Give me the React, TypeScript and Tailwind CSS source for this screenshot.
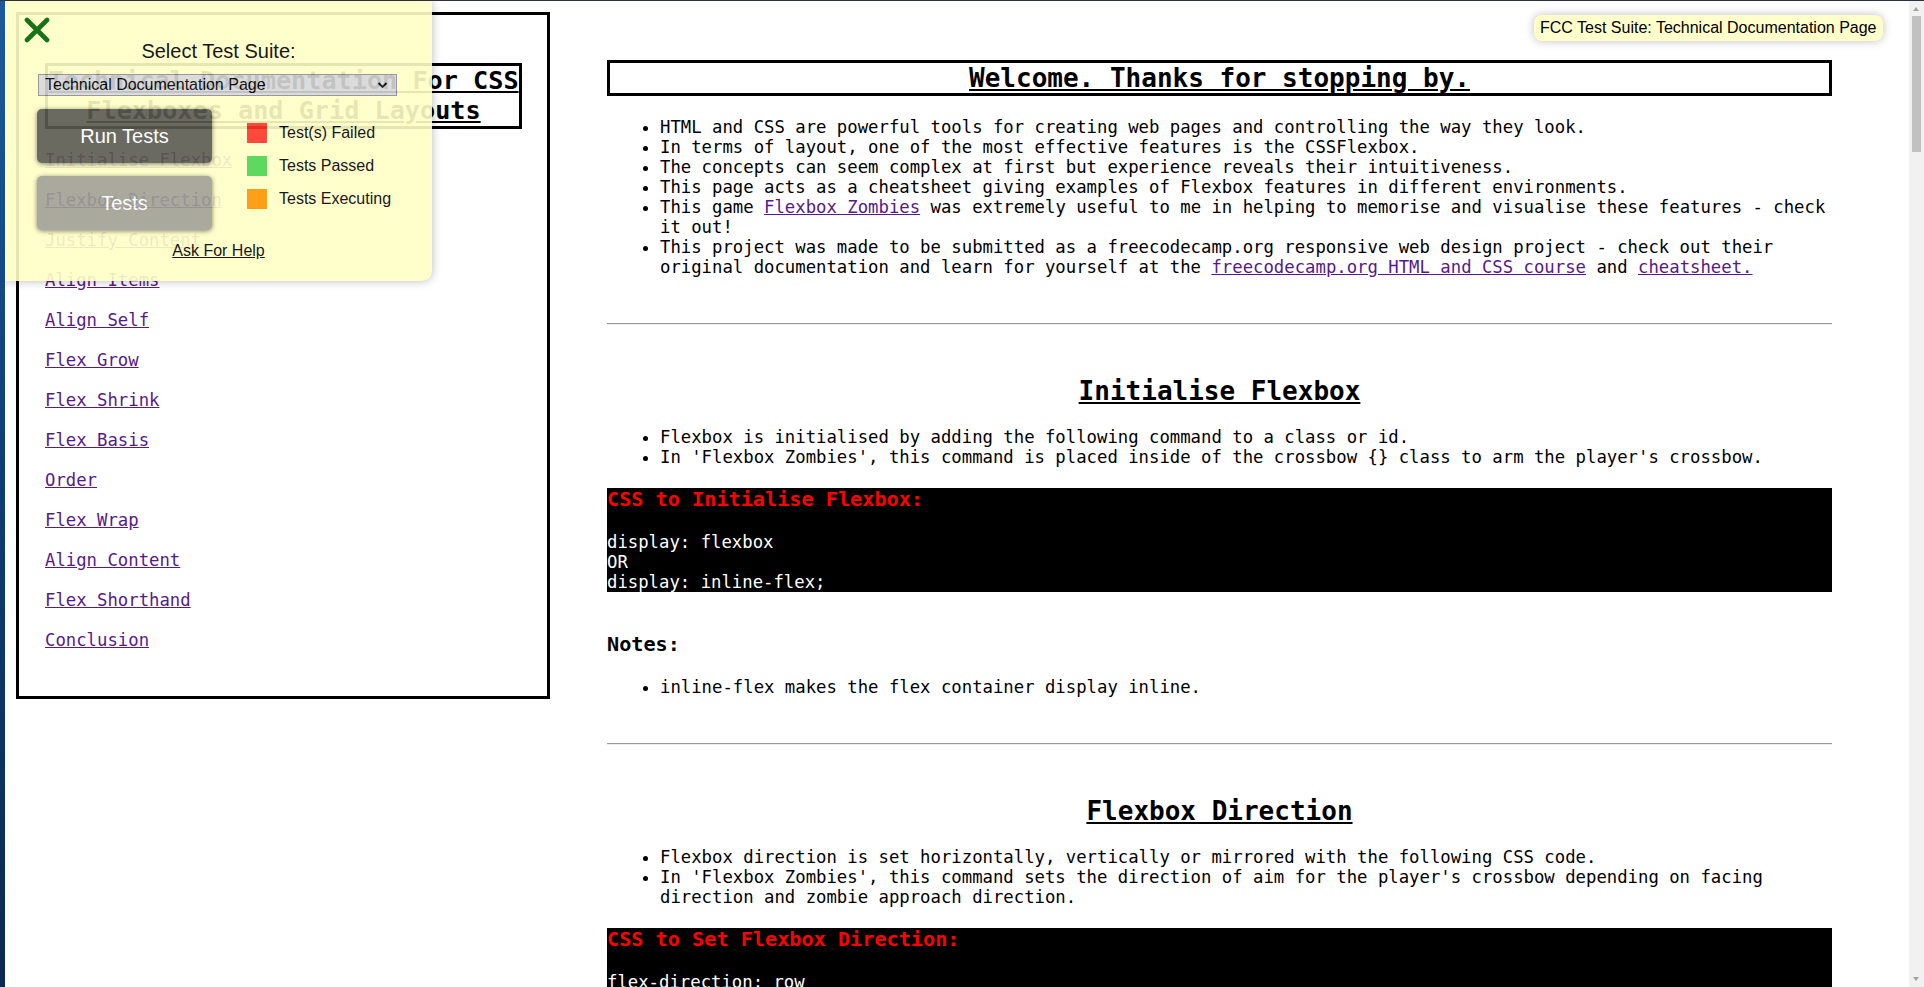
import type { ReactNode } from 'react'

const navLinks = [
  'Initialise Flexbox',
  'Flexbox Direction',
  'Justify Content',
  'Align Items',
  'Align Self',
  'Flex Grow',
  'Flex Shrink',
  'Flex Basis',
  'Order',
  'Flex Wrap',
  'Align Content',
  'Flex Shorthand',
  'Conclusion',
]

function Link({ children }: { children: ReactNode }) {
  return (
    <a className="text-[#551a8b] underline" href="#">
      {children}
    </a>
  )
}

function Bullets({ items, className = '' }: { items: ReactNode[]; className?: string }) {
  return (
    <ul className={`list-disc pl-[53px] ${className}`}>
      {items.map((item, i) => (
        <li key={i}>{item}</li>
      ))}
    </ul>
  )
}

function Heading({ children, className = '' }: { children: ReactNode; className?: string }) {
  return <h2 className={`text-center text-[26px] leading-[30px] font-bold underline ${className}`}>{children}</h2>
}

function Rule() {
  return <div className="mt-[46.5px] border-t border-b border-t-[#9a9a9a] border-b-[#ececec]" />
}

function CodeBlock({ title, lines }: { title: string; lines: string[] }) {
  return (
    <div className="mt-[21px] bg-black text-white">
      <h3 className="text-[20.2px] leading-[23.5px] font-bold text-[#ff0000]">{title}</h3>
      <div className="h-[20.5px]" />
      {lines.map((line) => (
        <div className="leading-[20px] whitespace-pre" key={line}>
          {line}
        </div>
      ))}
    </div>
  )
}

function TestPanel() {
  return (
    <div className="absolute top-0 left-0 h-[280px] w-[427px] rounded-br-[10px] bg-[#ffffc7] font-['Liberation_Sans',Arial,sans-serif] text-black opacity-90 shadow-[0_0_10px_rgba(0,0,0,0.3)]">
      <svg className="absolute top-[16px] left-[19px] h-[26px] w-[26px]" viewBox="0 0 26 26">
        <path d="M3 3 L23 23 M23 3 L3 23" stroke="#006400" strokeLinecap="round" strokeWidth="4.6" />
      </svg>
      <p className="pt-[39px] text-center text-[20px] leading-[22px]">Select Test Suite:</p>
      <div className="mt-[12px] ml-[33px] flex h-[22px] w-[359px] items-center justify-between border border-[#8f8f8f] bg-[#d8d8d8] pr-[8px] pl-[6px] text-[16px]">
        <span>Technical Documentation Page</span>
        <svg className="h-[8px] w-[11px]" viewBox="0 0 11 8">
          <path d="M1.5 2 L5.5 6 L9.5 2" fill="none" stroke="#111" strokeWidth="1.8" />
        </svg>
      </div>
      <div className="mt-[13px] ml-[32px] flex">
        <div className="flex w-[175px] flex-col gap-[13px]">
          <button className="h-[54px] rounded-[5px] bg-[#5a5a50] text-[20px] text-white shadow-[0_1px_5px_rgba(0,0,0,0.55)]" type="button">
            Run Tests
          </button>
          <button className="h-[54px] rounded-[5px] bg-[#a0a094] text-[20px] text-white shadow-[0_1px_5px_rgba(0,0,0,0.55)]" type="button">
            Tests
          </button>
        </div>
        <div className="mt-[14px] ml-[35px] flex flex-col gap-[13px] text-[16px]">
          <div className="flex h-[20px] items-center gap-[12px]">
            <span className="h-[20px] w-[20px] bg-[#ff3627]" />
            Test(s) Failed
          </div>
          <div className="flex h-[20px] items-center gap-[12px]">
            <span className="h-[20px] w-[20px] bg-[#4ed44e]" />
            Tests Passed
          </div>
          <div className="flex h-[20px] items-center gap-[12px]">
            <span className="h-[20px] w-[20px] bg-[#ff9500]" />
            Tests Executing
          </div>
        </div>
      </div>
      <p className="mt-[12px] text-center text-[16px] leading-[18px]">
        <a className="underline" href="#">
          Ask For Help
        </a>
      </p>
    </div>
  )
}

function Scrollbar() {
  return (
    <div className="relative w-[15px] bg-[#f1f1f1]">
      <span className="absolute top-[6px] left-[4px] h-0 w-0 border-r-[3.5px] border-b-[4px] border-l-[3.5px] border-r-transparent border-b-[#a3a3a3] border-l-transparent" />
      <div className="absolute top-[15px] left-[3px] h-[136px] w-[9px] bg-[#c1c1c1]" />
      <span className="absolute bottom-[6px] left-[4px] h-0 w-0 border-t-[4px] border-r-[3.5px] border-l-[3.5px] border-t-[#a3a3a3] border-r-transparent border-l-transparent" />
    </div>
  )
}

export default function App() {
  return (
    <div className="flex h-[987px] flex-col overflow-hidden bg-white">
      <div className="h-px bg-[#2d323c]" />
      <div className="flex min-h-0 flex-1">
        <div className="w-[5px] bg-gradient-to-b from-[#1c5a9c] via-[#0e3d73] to-[#0a2a50]" />
        <div className="relative flex-1 overflow-hidden font-['DejaVu_Sans_Mono',monospace] text-[17.3px] leading-[20px] text-black">
          <div className="flex items-start pt-[11px] pl-[11px]">
            <nav className="h-[687px] w-[534px] shrink-0 border-[3px] border-black pt-[48px]">
              <h1 className="ml-[26px] w-[477px] border-[3px] border-black text-center text-[25.2px] leading-[30px] font-bold whitespace-nowrap underline">
                Technical Documentation For CSS
                <br />
                Flexboxes and Grid Layouts
              </h1>
              <div className="mt-[20.5px] flex flex-col items-start gap-[20px] pl-[26px]">
                {navLinks.map((label) => (
                  <Link key={label}>{label}</Link>
                ))}
              </div>
            </nav>
            <main className="mt-[48px] ml-[57px] w-[1225px] shrink-0">
              <h2 className="border-[3px] border-black text-center text-[26px] leading-[30px] font-bold">
                <span className="underline">Welcome. Thanks for stopping by.</span>
              </h2>
              <Bullets
                className="mt-[20.5px]"
                items={[
                  'HTML and CSS are powerful tools for creating web pages and controlling the way they look.',
                  'In terms of layout, one of the most effective features is the CSSFlexbox.',
                  'The concepts can seem complex at first but experience reveals their intuitiveness.',
                  'This page acts as a cheatsheet giving examples of Flexbox features in different environments.',
                  <>
                    This game <Link>Flexbox Zombies</Link> was extremely useful to me in helping to memorise and visualise these
                    features - check it out!
                  </>,
                  <>
                    This project was made to be submitted as a freecodecamp.org responsive web design project - check out their
                    original documentation and learn for yourself at the <Link>freecodecamp.org HTML and CSS course</Link> and{' '}
                    <Link>cheatsheet.</Link>
                  </>,
                ]}
              />

              <Rule />
              <Heading className="mt-[51px]">Initialise Flexbox</Heading>
              <Bullets
                className="mt-[21px]"
                items={[
                  'Flexbox is initialised by adding the following command to a class or id.',
                  "In 'Flexbox Zombies', this command is placed inside of the crossbow {} class to arm the player's crossbow.",
                ]}
              />
              <CodeBlock lines={['display: flexbox', 'OR', 'display: inline-flex;']} title="CSS to Initialise Flexbox:" />
              <h3 className="mt-[41px] text-[20.2px] leading-[23.5px] font-bold">Notes:</h3>
              <Bullets className="mt-[20px]" items={['inline-flex makes the flex container display inline.']} />

              <Rule />
              <Heading className="mt-[51px]">Flexbox Direction</Heading>
              <Bullets
                className="mt-[21px]"
                items={[
                  'Flexbox direction is set horizontally, vertically or mirrored with the following CSS code.',
                  "In 'Flexbox Zombies', this command sets the direction of aim for the player's crossbow depending on facing direction and zombie approach direction.",
                ]}
              />
              <CodeBlock
                lines={[
                  'flex-direction: row',
                  'flex-direction: row-reverse',
                  'flex-direction: column',
                  'flex-direction: column-reverse',
                ]}
                title="CSS to Set Flexbox Direction:"
              />
            </main>
          </div>

          <TestPanel />

          <div className="absolute top-[14px] right-[26px] flex h-[26px] items-center rounded-[8px] bg-[#ffffcc] px-[6.5px] font-['Liberation_Sans',Arial,sans-serif] text-[16px] text-black shadow-[0_0_10px_rgba(0,0,0,0.25)]">
            FCC Test Suite: Technical Documentation Page
          </div>
        </div>
        <Scrollbar />
      </div>
    </div>
  )
}
